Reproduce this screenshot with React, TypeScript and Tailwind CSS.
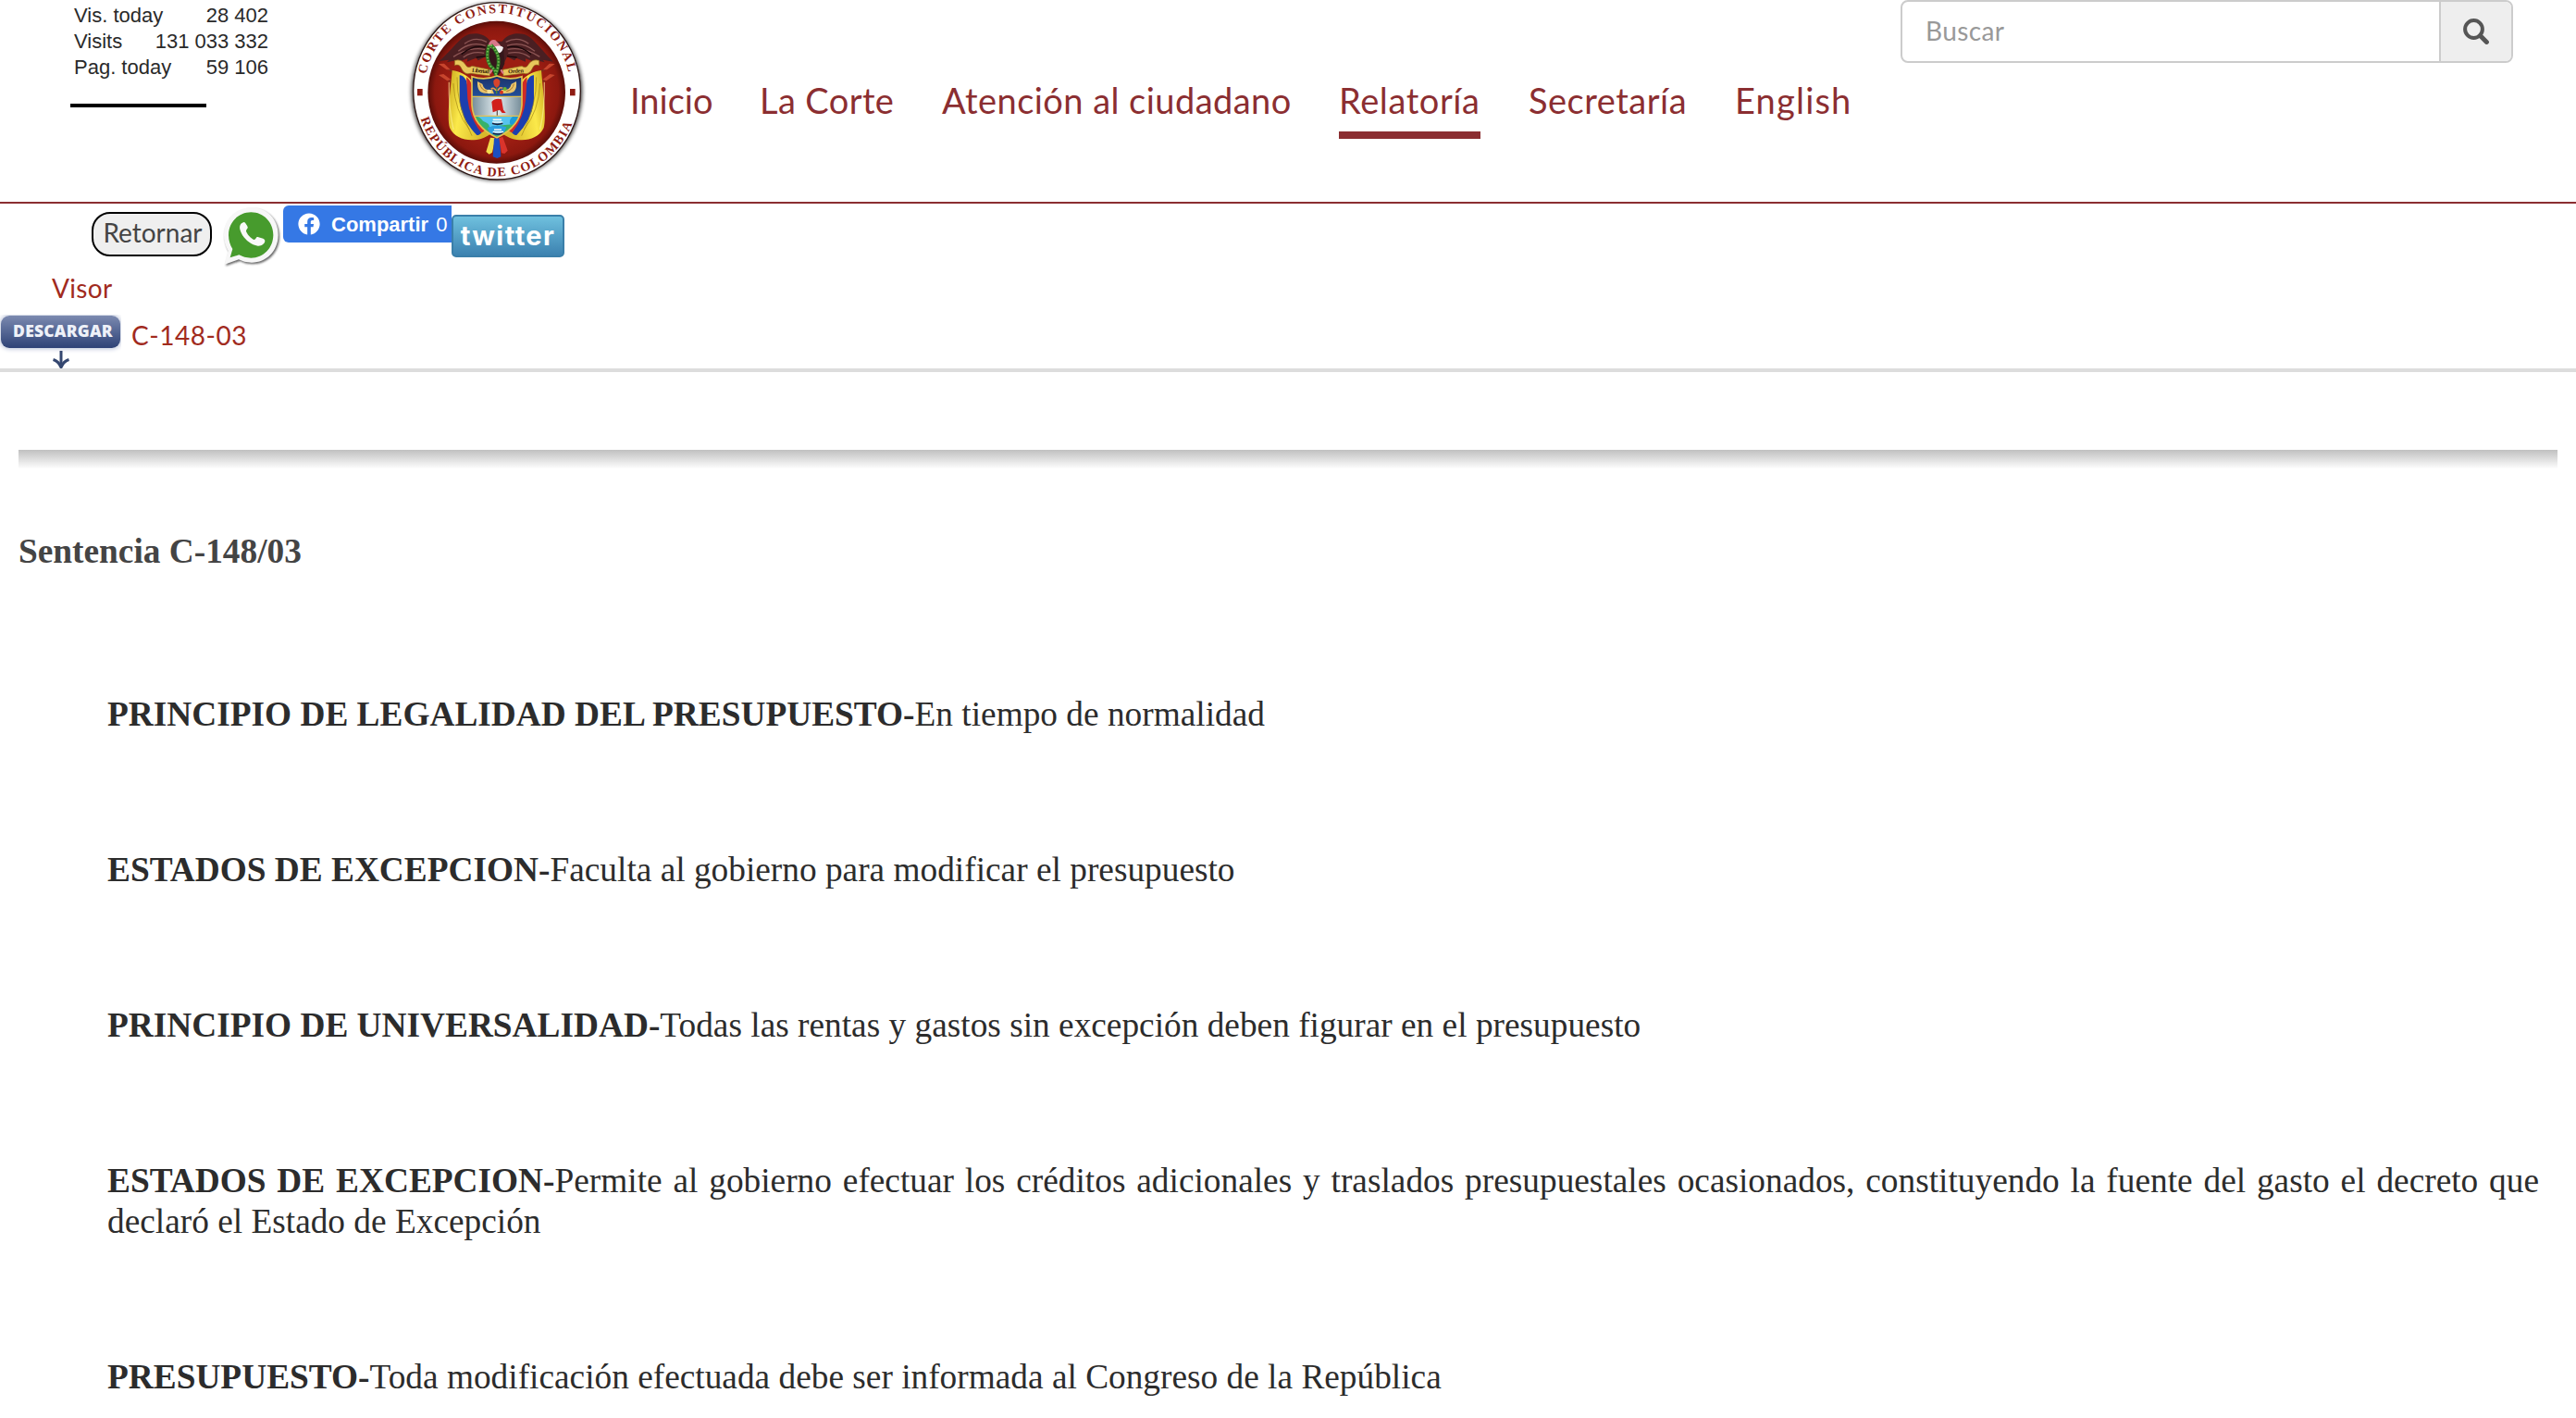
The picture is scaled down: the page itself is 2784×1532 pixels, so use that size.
import { FaFacebook } from "react-icons/fa";

function CourtSeal() {
  return (
    <svg className="h-[210px] w-[220px] shrink-0" viewBox="0 0 660 630" aria-label="Corte Constitucional">
      <defs>
        <radialGradient id="sealRed" cx="0.5" cy="0.5" r="0.5">
          <stop offset="0.7" stopColor="#9c1d12" />
          <stop offset="0.9" stopColor="#8c180f" />
          <stop offset="1" stopColor="#5a0e09" />
        </radialGradient>
        <linearGradient id="flagYellow" x1="0" y1="0" x2="1" y2="0.3">
          <stop offset="0" stopColor="#c9a81c" />
          <stop offset="0.4" stopColor="#fbe94a" />
          <stop offset="1" stopColor="#d8b92a" />
        </linearGradient>
        <linearGradient id="shieldSteel" x1="0" y1="0" x2="1" y2="0">
          <stop offset="0" stopColor="#6f8794" />
          <stop offset="0.5" stopColor="#e3edf0" />
          <stop offset="1" stopColor="#6f8794" />
        </linearGradient>
        <linearGradient id="shieldBlue" x1="0" y1="0" x2="0" y2="1">
          <stop offset="0" stopColor="#1b2f63" />
          <stop offset="1" stopColor="#23509c" />
        </linearGradient>
        <filter id="sealShadow" x="-10%" y="-10%" width="120%" height="120%">
          <feGaussianBlur stdDeviation="7" />
        </filter>
        <path id="sealTop" d="M92 241 A235 244 0 0 1 554 241" />
        <path id="sealBottom" d="M74 385 A262 273 0 0 0 571 385" />
        <clipPath id="shieldClip">
          <path d="M240 248 Q280 262 321 246 Q362 262 402 248 L402 340 Q398 410 321 446 Q244 410 240 340 Z" />
        </clipPath>
        <g id="halfFlags">
          <path d="M138 208 L178 232 M136 244 L172 264" stroke="#7c2d1c" strokeWidth="6" />
          <path d="M132 207 L150 206 L170 226 L158 226 Z M132 243 L148 240 L172 258 L160 262 Z" fill="#c8452d" />
          <path d="M176 228 C200 232 222 240 240 262 L262 372 L300 434 C262 464 190 462 168 414 C158 380 170 300 176 228 Z" fill="url(#flagYellow)" />
          <path d="M200 244 Q212 242 222 262 L250 380 L276 424 Q266 440 256 438 Q208 390 200 330 Z" fill="#1c3fae" />
          <path d="M222 250 Q234 258 240 276 L258 382 L286 414 Q280 428 270 430 Q232 380 226 320 Z" fill="#d12a26" />
          <path d="M180 270 Q184 360 232 420 M192 250 Q190 340 240 440" stroke="#a78a16" strokeWidth="3" fill="none" opacity="0.7" />
          <path d="M166 266 Q164 350 180 420" stroke="#fff59a" strokeWidth="4" fill="none" opacity="0.6" />
        </g>
      </defs>

      <ellipse cx="321" cy="297" rx="277" ry="288" fill="#000" opacity="0.75" filter="url(#sealShadow)" />
      <ellipse cx="321" cy="295" rx="271" ry="287" fill="#fff" stroke="#2b1513" strokeWidth="4" />
      <ellipse cx="320" cy="299" rx="223" ry="231" fill="url(#sealRed)" />
      <rect x="63" y="288" width="17" height="22" fill="#8f1c13" />
      <rect x="558" y="288" width="17" height="22" fill="#8f1c13" />
      <g fill="#8f1c13" fontFamily="'Liberation Serif', serif" fontWeight="700" fontSize="42">
        <text>
          <textPath href="#sealTop" textLength="655" lengthAdjust="spacing">CORTE CONSTITUCIONAL</textPath>
        </text>
        <text>
          <textPath href="#sealBottom" textLength="648" lengthAdjust="spacing">REPÚBLICA DE COLOMBIA</textPath>
        </text>
      </g>

      {/* flags on both sides of the shield */}
      <use href="#halfFlags" />
      <use href="#halfFlags" transform="translate(641 0) scale(-1 1)" />

      {/* condor */}
      <path d="M300 134 C284 110 254 104 228 112 C200 122 178 160 134 198 L166 194 L158 202 L196 194 L192 202 L226 190 L224 200 L254 188 L260 196 L284 184 L300 214 L340 214 L354 184 L378 196 L384 188 L414 200 L414 190 L446 202 L442 194 L476 202 L470 194 L504 200 C462 160 440 122 412 112 C386 104 354 110 338 134 Z" fill="#4a1f22" />
      <path d="M288 136 Q250 116 216 142 M284 148 Q236 132 196 166 M282 160 Q232 150 180 184 M280 172 Q240 164 212 186 M350 136 Q390 116 424 142 M354 148 Q404 132 444 166 M356 160 Q408 150 460 184 M358 172 Q400 164 428 186" stroke="#8d5655" strokeWidth="4" fill="none" />
      <path d="M284 154 Q246 142 206 176 M354 154 Q392 142 432 176 M286 182 L254 186 M354 182 L386 186" stroke="#1c090b" strokeWidth="4" fill="none" />
      <path d="M298 150 Q320 172 342 150 L346 206 Q334 238 320 248 Q302 236 296 206 Z" fill="#35171b" />
      <path d="M294 144 Q300 126 316 130 L330 144 Q338 152 332 164 L316 158 Q302 158 292 152 Z" fill="#d8788a" />
      <path d="M312 152 Q334 144 342 154 Q338 172 326 172 Z" fill="#f3eff0" />
      <path d="M296 146 Q282 186 300 214 Q318 226 318 246 M302 146 Q330 172 326 206 Q324 226 316 244" stroke="#2f7a24" strokeWidth="11" fill="none" />
      <path d="M296 146 Q282 186 300 214 Q318 226 318 246 M302 146 Q330 172 326 206 Q324 226 316 244" stroke="#7ec256" strokeWidth="6" strokeDasharray="4 6" fill="none" />

      {/* motto ribbon */}
      <path d="M184 196 Q206 190 218 208 Q226 224 240 214 L300 226 L298 246 L236 238 Q216 244 206 222 Q200 206 184 212 Z" fill="#e8c75c" stroke="#8a6418" strokeWidth="2" />
      <path d="M458 196 Q436 190 424 208 Q416 224 402 214 L340 226 L342 246 L406 238 Q426 244 436 222 Q442 206 458 212 Z" fill="#e8c75c" stroke="#8a6418" strokeWidth="2" />
      <g fill="#3b2407" fontFamily="'Liberation Serif', serif" fontWeight="700" fontSize="19">
        <text x="240" y="233" transform="rotate(5 240 233)" textLength="56">Libertad</text>
        <text x="358" y="238" transform="rotate(-4 358 238)" textLength="50">Orden</text>
      </g>
      <path d="M298 238 L306 226 M342 238 L334 226" stroke="#d8788a" strokeWidth="6" />

      {/* ribbon tails */}
      <path d="M300 446 L286 492 L296 500 L306 494 L316 448 Z" fill="#f2dc4a" />
      <path d="M312 448 L308 508 L322 513 L334 508 L330 448 Z" fill="#1c4fc0" />
      <path d="M328 448 L336 496 L346 498 L356 488 L340 444 Z" fill="#d9342c" />

      {/* shield */}
      <g clipPath="url(#shieldClip)">
        <rect x="236" y="240" width="170" height="75" fill="url(#shieldBlue)" />
        <rect x="236" y="313" width="170" height="64" fill="url(#shieldSteel)" />
        <rect x="236" y="376" width="170" height="76" fill="#56c3ee" />
        <path d="M236 378 Q262 372 276 392 Q300 402 296 412 L340 406 L400 400 L402 420 L330 452 L250 430 Z" fill="#37b26b" />
        <path d="M290 414 Q320 402 352 412 L340 440 L300 436 Z" fill="#2c9fe0" />
        <path d="M372 378 Q356 392 366 404 L402 400 L402 376 Z" fill="#1d9ad6" />
        <path d="M236 313 H406 M236 376 H406" stroke="#e3c14f" strokeWidth="4" />
      </g>
      <path d="M258 264 Q256 302 284 302 L312 304 L306 290 Q280 296 274 272 Z" fill="#e9c46a" />
      <path d="M384 264 Q388 302 358 302 L330 304 L336 290 Q362 296 368 272 Z" fill="#e9c46a" />
      <path d="M266 272 Q270 292 290 296 M376 272 Q372 292 352 296" stroke="#a9752b" strokeWidth="3" fill="none" />
      <circle cx="296" cy="297" r="7" fill="#f6df95" />
      <circle cx="347" cy="288" r="6" fill="#69b52f" />
      <circle cx="336" cy="299" r="6" fill="#d7301f" />
      <path d="M320 304 V268" stroke="#4b8b32" strokeWidth="4" />
      <path d="M310 262 Q320 248 331 262 Q332 282 320 284 Q309 280 310 262 Z" fill="#d8442c" />
      <path d="M302 288 Q312 282 318 294 M340 286 Q330 280 324 294" stroke="#e39a50" strokeWidth="5" fill="none" />
      <path d="M304 330 Q316 316 336 322 L342 356 L350 366 L338 366 L330 356 L308 364 Z" fill="#d11f1c" />
      <path d="M322 358 V374" stroke="#6b5a50" strokeWidth="4" />
      <path d="M308 388 H336 M306 396 H340 M312 420 H336 M308 428 H342" stroke="#f4f8fa" strokeWidth="5" />
      <path d="M306 400 Q322 406 340 400 M308 432 Q324 438 342 432" stroke="#1b2440" strokeWidth="5" fill="none" />
      <path d="M240 248 Q280 262 321 246 Q362 262 402 248 L402 340 Q398 410 321 446 Q244 410 240 340 Z" fill="none" stroke="#e3c14f" strokeWidth="5" />
    </svg>
  );
}

function WhatsAppBubble() {
  return (
    <svg className="h-[70px] w-[66px] shrink-0" viewBox="450 21 198 210" aria-label="WhatsApp">
      <defs>
        <filter id="waShadow" x="-15%" y="-15%" width="130%" height="130%">
          <feGaussianBlur stdDeviation="3" />
        </filter>
        <path id="waBubble" d="M546 28 C596 28 632 66 632 116 C632 168 594 206 546 206 C528 206 516 202 504 196 L458 212 L470 168 C460 150 456 134 456 116 C456 66 494 28 546 28 Z" />
      </defs>
      <use href="#waBubble" x="4" y="5" fill="#333" opacity="0.75" filter="url(#waShadow)" />
      <use href="#waBubble" fill="#f7f7f7" />
      <path d="M544 43 C585 43 616 76 616 116 C616 158 585 191 544 191 C528 191 516 187 505 181 L476 190 L484 162 C476 149 471 134 471 116 C471 76 503 43 544 43 Z" fill="#479b2d" />
      <path d="M516 77 C508 80 506 90 508 98 C515 124 538 147 566 152 C578 153 588 146 589 136 C589 131 586 130 583 128 L568 124 C564 122 562 124 560 127 C557 132 554 133 549 130 C540 124 533 116 529 107 C527 103 528 101 531 97 C534 94 534 91 531 86 L525 77 C522 73 519 75 516 77 Z" fill="#f9f9f9" />
    </svg>
  );
}

function DownloadBadge() {
  return (
    <div className="flex h-[58px] w-[131px] shrink-0 flex-col items-center overflow-hidden">
      <div className="mt-px flex h-[37px] w-[129px] items-center justify-center rounded-[9px] bg-linear-to-b from-[#7c8ab0] to-[#2f4377] pb-px shadow-[0_0_5px_1px_#b9c2d8]">
        <span className="pl-[5px] font-['Open_Sans'] text-[17.5px] leading-none font-extrabold tracking-[0.2px] text-[#eef1f8]">DESCARGAR</span>
      </div>
      <svg className="mt-[3px] h-[19px] w-[20px] shrink-0" viewBox="0 0 20 19" fill="none" stroke="#34466f">
        <path d="M10 0 V18" strokeWidth="3" />
        <path d="M1.5 9.5 Q7 11 10 17.5 Q13 11 18.5 9.5" strokeWidth="3.2" />
      </svg>
    </div>
  );
}

const stats = [
  { label: "Vis. today", value: "28 402" },
  { label: "Visits", value: "131 033 332" },
  { label: "Pag. today", value: "59 106" },
];

const nav = [
  { label: "Inicio", size: "w-[88px]" },
  { label: "La Corte", size: "w-[145px] tracking-[0.4px]" },
  { label: "Atención al ciudadano", size: "w-[377px] tracking-[0.45px]" },
  { label: "Relatoría", size: "w-[153px] tracking-[0.6px]", active: true },
  { label: "Secretaría", size: "w-[171px] tracking-[0.5px]" },
  { label: "English", size: "w-[128px] tracking-[1.2px]" },
];

const topics = [
  { title: "PRINCIPIO DE LEGALIDAD DEL PRESUPUESTO", text: "En tiempo de normalidad" },
  { title: "ESTADOS DE EXCEPCION", text: "Faculta al gobierno para modificar el presupuesto" },
  { title: "PRINCIPIO DE UNIVERSALIDAD", text: "Todas las rentas y gastos sin excepción deben figurar en el presupuesto" },
  {
    title: "ESTADOS DE EXCEPCION",
    text: "Permite al gobierno efectuar los créditos adicionales y traslados presupuestales ocasionados, constituyendo la fuente del gasto el decreto que declaró el Estado de Excepción",
  },
  { title: "PRESUPUESTO", text: "Toda modificación efectuada debe ser informada al Congreso de la República" },
];

export default function App() {
  return (
    <div className="h-[1532px] w-[2784px] overflow-hidden bg-white font-[Lato,sans-serif]">
      <header className="flex h-[220px] items-start border-b-2 border-[#8b2e31] pr-[68px]">
        <div className="w-[430px] shrink-0 pt-[3px] pl-[80px] font-['Liberation_Sans',sans-serif] text-[22px] leading-[28px] text-[#2a2a2a]">
          {stats.map((s) => (
            <div key={s.label} className="flex w-[210px] justify-between">
              <span>{s.label}</span>
              <span>{s.value}</span>
            </div>
          ))}
          <div className="mt-[25px] -ml-1 h-1 w-[147px] bg-black" />
        </div>
        <CourtSeal />
        <nav className="ml-[31px] flex gap-[52px] pt-[85px] text-[38px] leading-[46px] whitespace-nowrap text-[#8b2e31]">
          {nav.map((n) => (
            <a key={n.label} className={`${n.size} shrink-0 pb-[11px] ${n.active ? "border-b-8 border-[#8b2e31]" : ""}`}>
              {n.label}
            </a>
          ))}
        </nav>
        <div className="ml-auto flex h-[68px] w-[662px] overflow-hidden rounded-[8px] border-2 border-[#ccc]">
          <input
            className="min-w-0 flex-1 px-[25px] pb-[3px] text-[28px] tracking-[0.4px] placeholder:text-[#999]"
            placeholder="Buscar"
          />
          <button className="flex w-[78px] items-center justify-center border-l-2 border-[#ccc] bg-[#eee]">
            <svg className="h-[28px] w-[28px]" viewBox="0 0 28 28" fill="none" stroke="#555">
              <circle cx="11.5" cy="11.5" r="9.4" strokeWidth="4" />
              <path d="M18.5 18.5 L25.4 25.4" strokeWidth="5" strokeLinecap="round" />
            </svg>
          </button>
        </div>
      </header>

      <section className="h-[182px] border-b-4 border-[#ddd] text-[28px] leading-[40px] text-[#a12b1e]">
        <div className="flex h-[71px] items-start pl-[99px]">
          <button className="mt-[9px] h-[48px] w-[130px] rounded-[20px] border-2 border-black bg-[#efefef] pb-1 pl-[2px] leading-[40px] text-[#444]">
            Retornar
          </button>
          <div className="mt-[2px] ml-[11px] flex shrink-0">
            <WhatsAppBubble />
          </div>
          <div className="mt-[2px] flex h-[40px] w-[182px] items-center rounded-l-[6px] bg-[#3578e5] pl-4 font-['Liberation_Sans',sans-serif] text-[22px] leading-[26px] text-white">
            <FaFacebook className="size-6 shrink-0" />
            <span className="ml-3 pt-[2px] font-bold">Compartir</span>
            <span className="ml-2 pt-[2px]">0</span>
          </div>
          <div className="mt-[12px] flex h-[46px] w-[122px] items-center justify-center rounded-[5px] border-2 border-[#3a7fa9] bg-linear-to-b from-[#6fc0de] to-[#3c82b0] pb-[2px] font-[Inter] text-[29px] leading-none font-bold tracking-[1.4px] text-white">
            twitter
          </div>
        </div>
        <div className="h-[49px] pl-[56px] tracking-[0.3px]">Visor</div>
        <div className="flex items-start">
          <DownloadBadge />
          <span className="mt-[2px] ml-[11px] tracking-[0.55px]">C-148-03</span>
        </div>
      </section>

      <main className="px-5 pt-[84px] font-['Liberation_Serif',serif] text-[37.333px] leading-[44px]">
        <div className="h-5 bg-linear-to-b from-[#c0c0c0] to-[#fdfdfd]" />
        <h1 className="mt-[68px] mb-[132px] font-bold text-[#444]">Sentencia C-148/03</h1>
        <div className="flex flex-col gap-[124px] pr-5 pl-24 text-justify text-[#2c2c2c]">
          {topics.map((t, i) => (
            <p key={i}>
              <b className="font-bold">{t.title}-</b>
              {t.text}
            </p>
          ))}
        </div>
      </main>
    </div>
  );
}
